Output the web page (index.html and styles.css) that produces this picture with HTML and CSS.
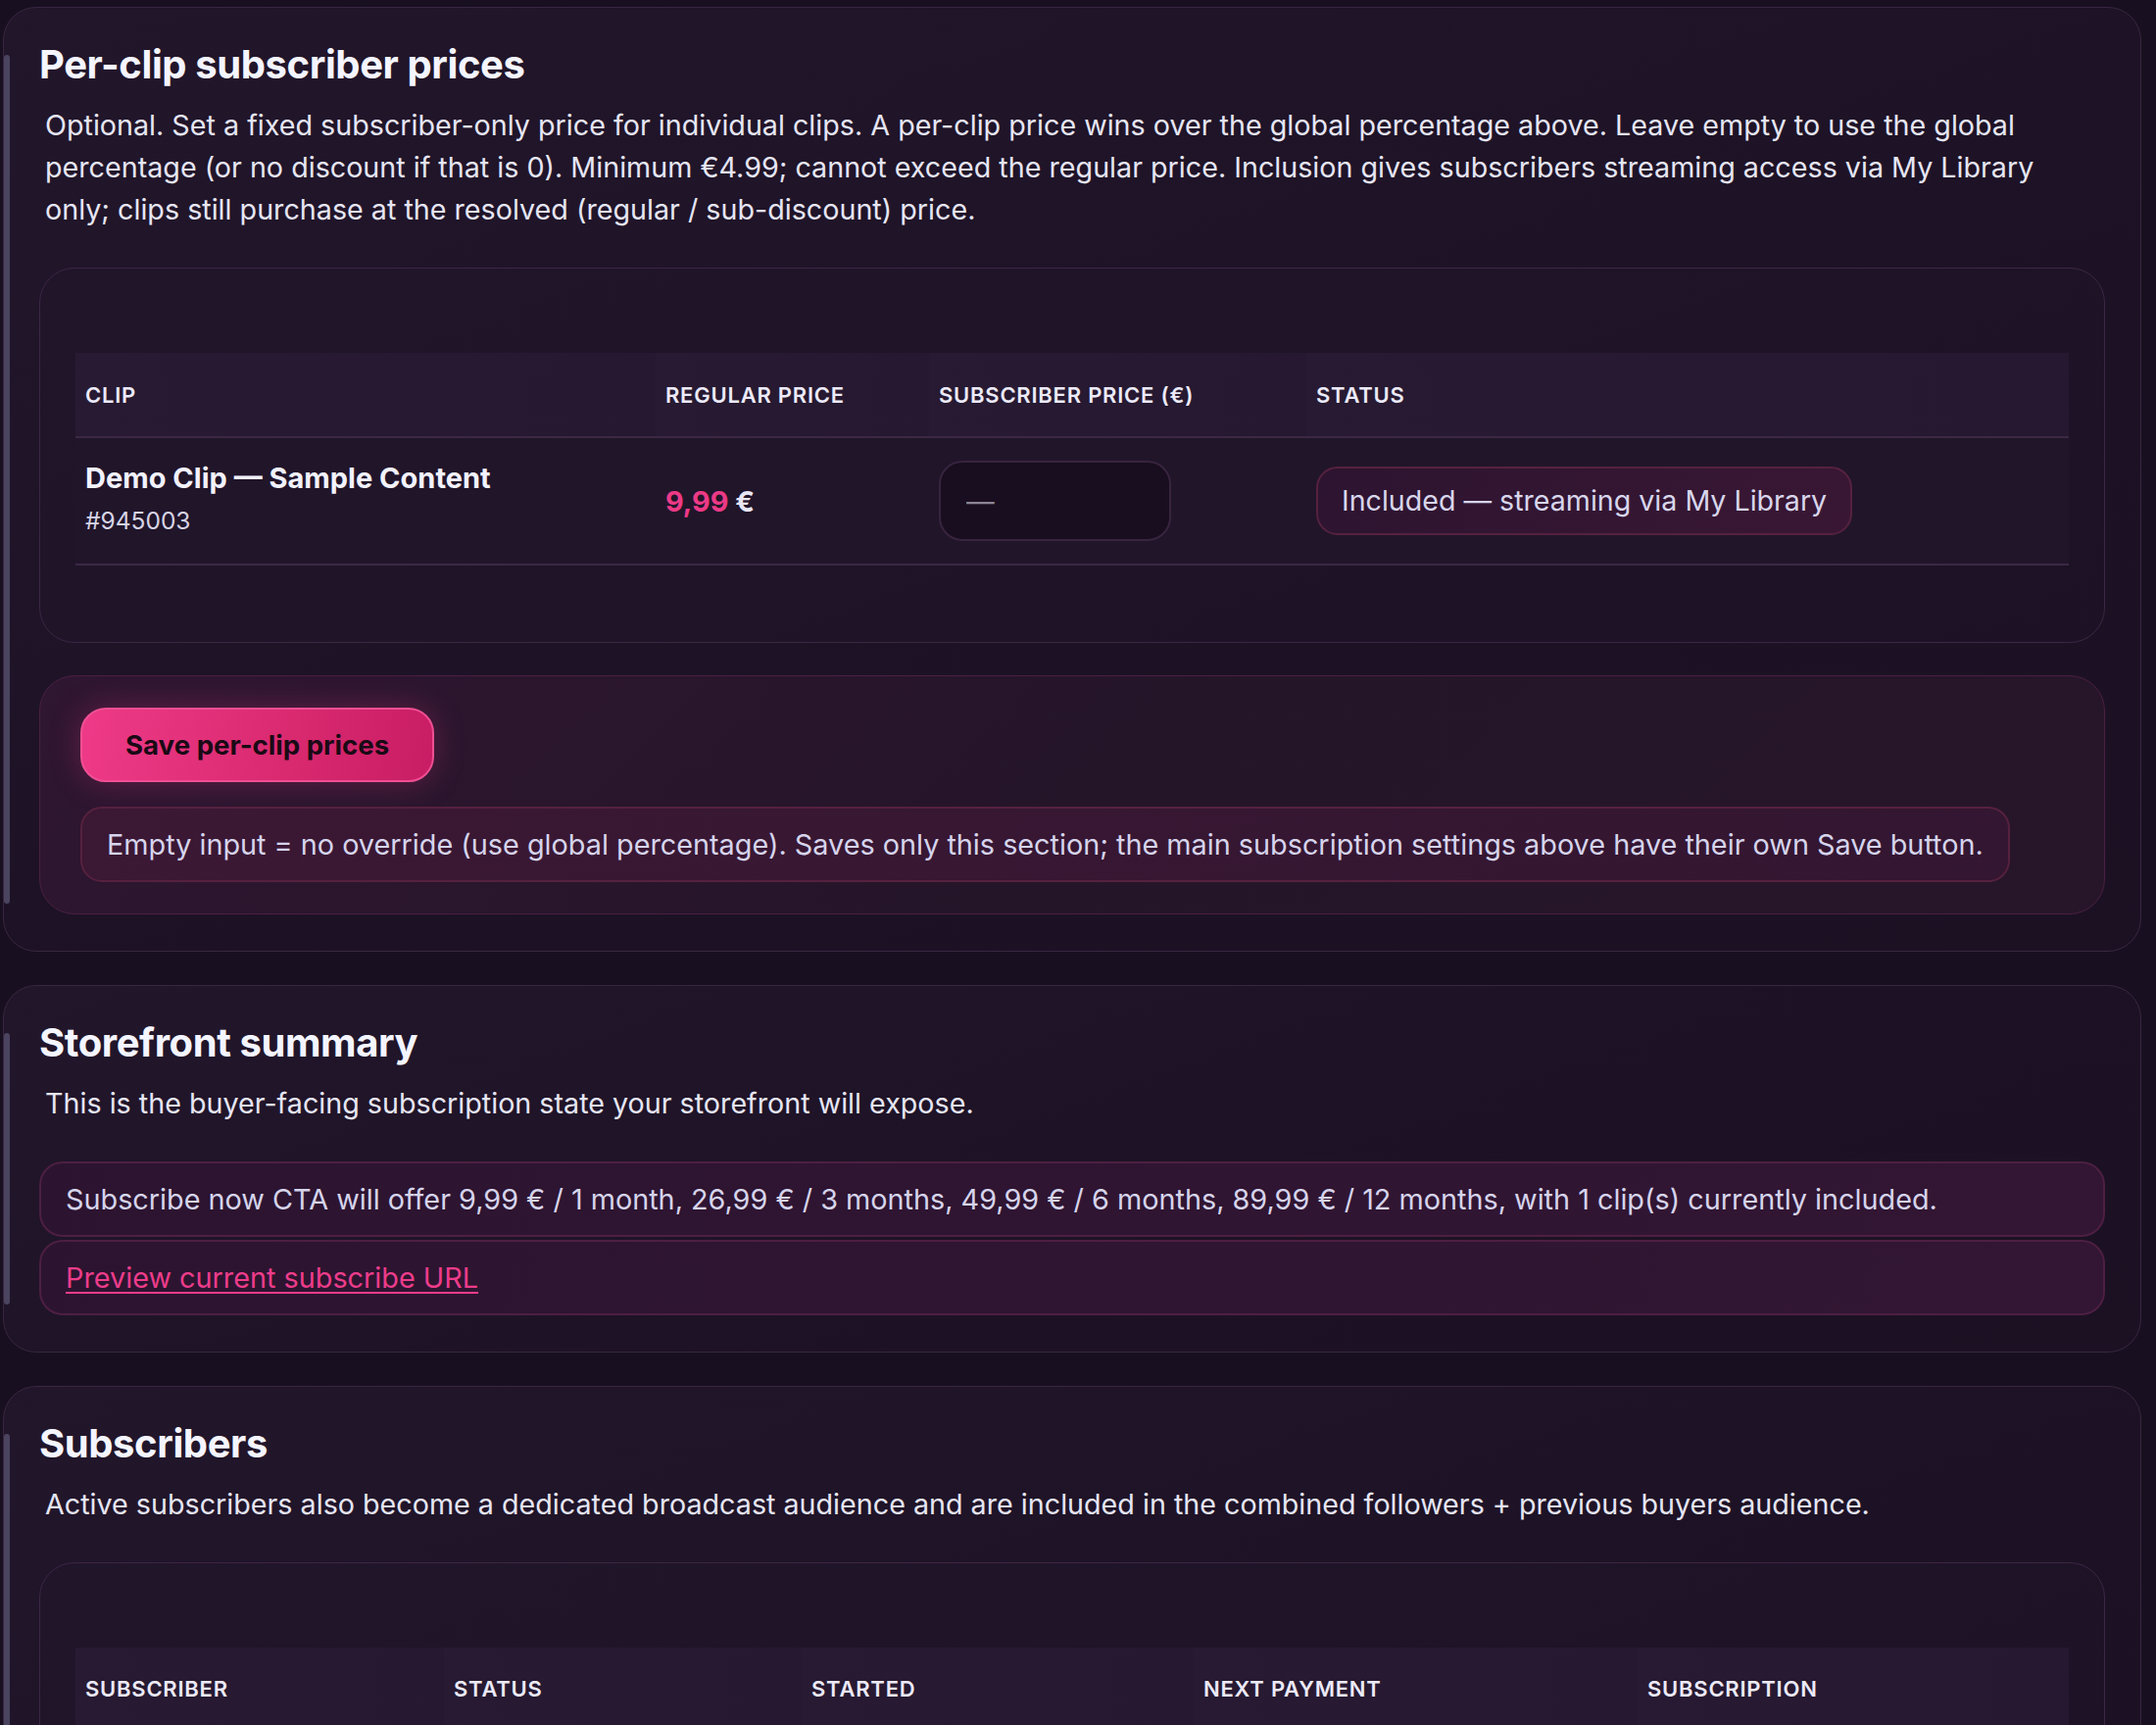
FILE: index.html
```html
<!DOCTYPE html>
<html>
<head>
    <meta charset="UTF-8">
    <meta name="viewport" content="width=device-width, initial-scale=1.0">
    <title>Subscriptions - Per-clip prices</title>
    <link rel="stylesheet" href="styles.css">
</head>
<body>
    <div class="page">
        <!-- Per-clip subscriber prices -->
        <section class="card">
            <h2>Per-clip subscriber prices</h2>
            <p class="lead">Optional. Set a fixed subscriber-only price for individual clips. A per-clip price wins over the global percentage above. Leave empty to use the global percentage (or no discount if that is 0). Minimum €4.99; cannot exceed the regular price. Inclusion gives subscribers streaming access via My Library only; clips still purchase at the resolved (regular / sub-discount) price.</p>

            <div class="table-card">
                <table class="data-table">
                    <thead>
                        <tr>
                            <th class="col-clip">Clip</th>
                            <th class="col-regular">Regular price</th>
                            <th class="col-sub">Subscriber price (€)</th>
                            <th>Status</th>
                        </tr>
                    </thead>
                    <tbody>
                        <tr>
                            <td>
                                <div class="clip-name">Demo Clip — Sample Content</div>
                                <div class="clip-id">#945003</div>
                            </td>
                            <td><span class="price"><span class="amount">9,99</span> €</span></td>
                            <td><input class="price-input" type="text" placeholder="—"></td>
                            <td><span class="badge">Included — streaming via My Library</span></td>
                        </tr>
                    </tbody>
                </table>
            </div>

            <div class="save-panel">
                <button class="btn">Save per-clip prices</button>
                <div class="note">Empty input = no override (use global percentage). Saves only this section; the main subscription settings above have their own Save button.</div>
            </div>
        </section>

        <!-- Storefront summary -->
        <section class="card">
            <h2>Storefront summary</h2>
            <p class="lead">This is the buyer-facing subscription state your storefront will expose.</p>
            <div class="summary-box">Subscribe now CTA will offer 9,99 € / 1 month, 26,99 € / 3 months, 49,99 € / 6 months, 89,99 € / 12 months, with 1 clip(s) currently included.</div>
            <div class="summary-box"><a href="#" class="link">Preview current subscribe URL</a></div>
        </section>

        <!-- Subscribers -->
        <section class="card">
            <h2>Subscribers</h2>
            <p class="lead">Active subscribers also become a dedicated broadcast audience and are included in the combined followers + previous buyers audience.</p>
            <div class="table-card">
                <table class="data-table">
                    <thead>
                        <tr>
                            <th class="col-subscriber">Subscriber</th>
                            <th class="col-status">Status</th>
                            <th class="col-started">Started</th>
                            <th class="col-next">Next payment</th>
                            <th>Subscription</th>
                        </tr>
                    </thead>
                    <tbody>
                        <tr>
                            <td>—</td>
                            <td>—</td>
                            <td>—</td>
                            <td>—</td>
                            <td>—</td>
                        </tr>
                    </tbody>
                </table>
            </div>
        </section>
    </div>
</body>
</html>
```

FILE: styles.css
```css
body {
    margin: 0;
    background: #181020;
    font-family: 'Inter', 'Noto Sans', sans-serif;
    color: #e8e8f6;
}
.page {
    padding: 7px 15px 0 3px;
    display: flex;
    flex-direction: column;
    gap: 34px;
}
.card {
    position: relative;
    background: linear-gradient(160deg, #22162b 0%, #1d1225 60%, #1c1123 100%);
    border: 1.5px solid #382640;
    border-radius: 34px;
    padding: 35px 36px 37px 36px;
}
.card::before {
    content: "";
    position: absolute;
    left: 0;
    top: 48px;
    bottom: 48px;
    width: 6px;
    border-radius: 3px;
    background: #4a4460;
}
h2 {
    margin: 0;
    font-size: 40px;
    line-height: 46px;
    font-weight: 700;
    letter-spacing: -0.01em;
    color: #f4f5ff;
}
.lead {
    margin: 17px 40px 38px 6px;
    font-size: 28.7px;
    line-height: 43px;
    color: #e6e6f4;
}
.table-card {
    border: 1.5px solid #3c2644;
    border-radius: 36px;
    padding: 86px 36px 78px 36px;
    background: linear-gradient(160deg, #21152a 0%, #1d1225 100%);
}
.data-table {
    width: 100%;
    border-collapse: collapse;
}
.data-table th {
    height: 85px;
    padding: 0 10px;
    text-align: left;
    font-size: 22px;
    font-weight: 600;
    letter-spacing: 0.035em;
    text-transform: uppercase;
    color: #eceaf8;
    background: linear-gradient(90deg, #271a32, #251830);
    border-bottom: 2px solid #3c2845;
}
.data-table td {
    height: 128px;
    padding: 0 10px;
    vertical-align: middle;
    font-size: 28.7px;
    background: #21152a;
    border-bottom: 2px solid #3c2845;
}
.col-clip { width: 572px; }
.col-regular { width: 259px; }
.col-sub { width: 365px; }
.col-subscriber { width: 356px; }
.col-status { width: 345px; }
.col-started { width: 380px; }
.col-next { width: 433px; }
.clip-name {
    font-size: 29px;
    font-weight: 700;
    color: #f2f2fd;
    line-height: 36px;
}
.clip-id {
    margin-top: 10px;
    margin-bottom: 6px;
    font-size: 24.5px;
    color: #d6d4e6;
    line-height: 30px;
}
.price {
    font-size: 28.8px;
    font-weight: 700;
    color: #e9e7f6;
}
.price .amount {
    color: #ec3a86;
}
.price-input {
    box-sizing: border-box;
    width: 237px;
    height: 82px;
    padding: 0 26px;
    border: 2px solid #38243f;
    border-radius: 24px;
    background: #190e1f;
    color: #e8e8f6;
    font-family: inherit;
    font-size: 28.7px;
    outline: none;
}
.price-input::placeholder {
    color: #8b8596;
}
.badge {
    display: inline-block;
    box-sizing: border-box;
    height: 70px;
    line-height: 66px;
    padding: 0 24px;
    border: 2px solid #55223f;
    border-radius: 22px;
    background: linear-gradient(120deg, #2d1430, #391734);
    font-size: 28.6px;
    color: #d8d6ec;
}
.save-panel {
    margin-top: 33px;
    padding: 32px 41px 32px 41px;
    border: 1.5px solid #4a1f42;
    border-radius: 36px;
    background: linear-gradient(135deg, #2f1631 0%, #251529 50%, #271629 100%);
}
.btn {
    display: block;
    box-sizing: border-box;
    height: 76px;
    padding: 0 44px;
    border: 2px solid #f04f94;
    border-radius: 26px;
    background: linear-gradient(100deg, #ee3a88 0%, #d9296f 60%, #c81d64 100%);
    box-shadow: 0 0 32px rgba(236, 58, 134, 0.28);
    color: #1a0a15;
    font-family: inherit;
    font-size: 27.6px;
    font-weight: 700;
    cursor: pointer;
}
.note {
    display: inline-block;
    margin-top: 25px;
    box-sizing: border-box;
    height: 77px;
    line-height: 73px;
    padding: 0 25px;
    border: 2px solid #56213f;
    border-radius: 22px;
    background: linear-gradient(100deg, #3b1834, #331631);
    font-size: 28.8px;
    color: #d6d4ec;
}
.summary-box {
    box-sizing: border-box;
    height: 77px;
    line-height: 73px;
    padding: 0 25px;
    margin-bottom: 2.5px;
    border: 2px solid #4d1f43;
    border-radius: 24px;
    background: linear-gradient(100deg, #2c1430, #321633);
    font-size: 28.8px;
    color: #d6d4ec;
}
.summary-box:last-child {
    margin-bottom: 0;
}
.link {
    color: #ee3c8b;
    text-decoration: underline;
    text-underline-offset: 4px;
}
```
